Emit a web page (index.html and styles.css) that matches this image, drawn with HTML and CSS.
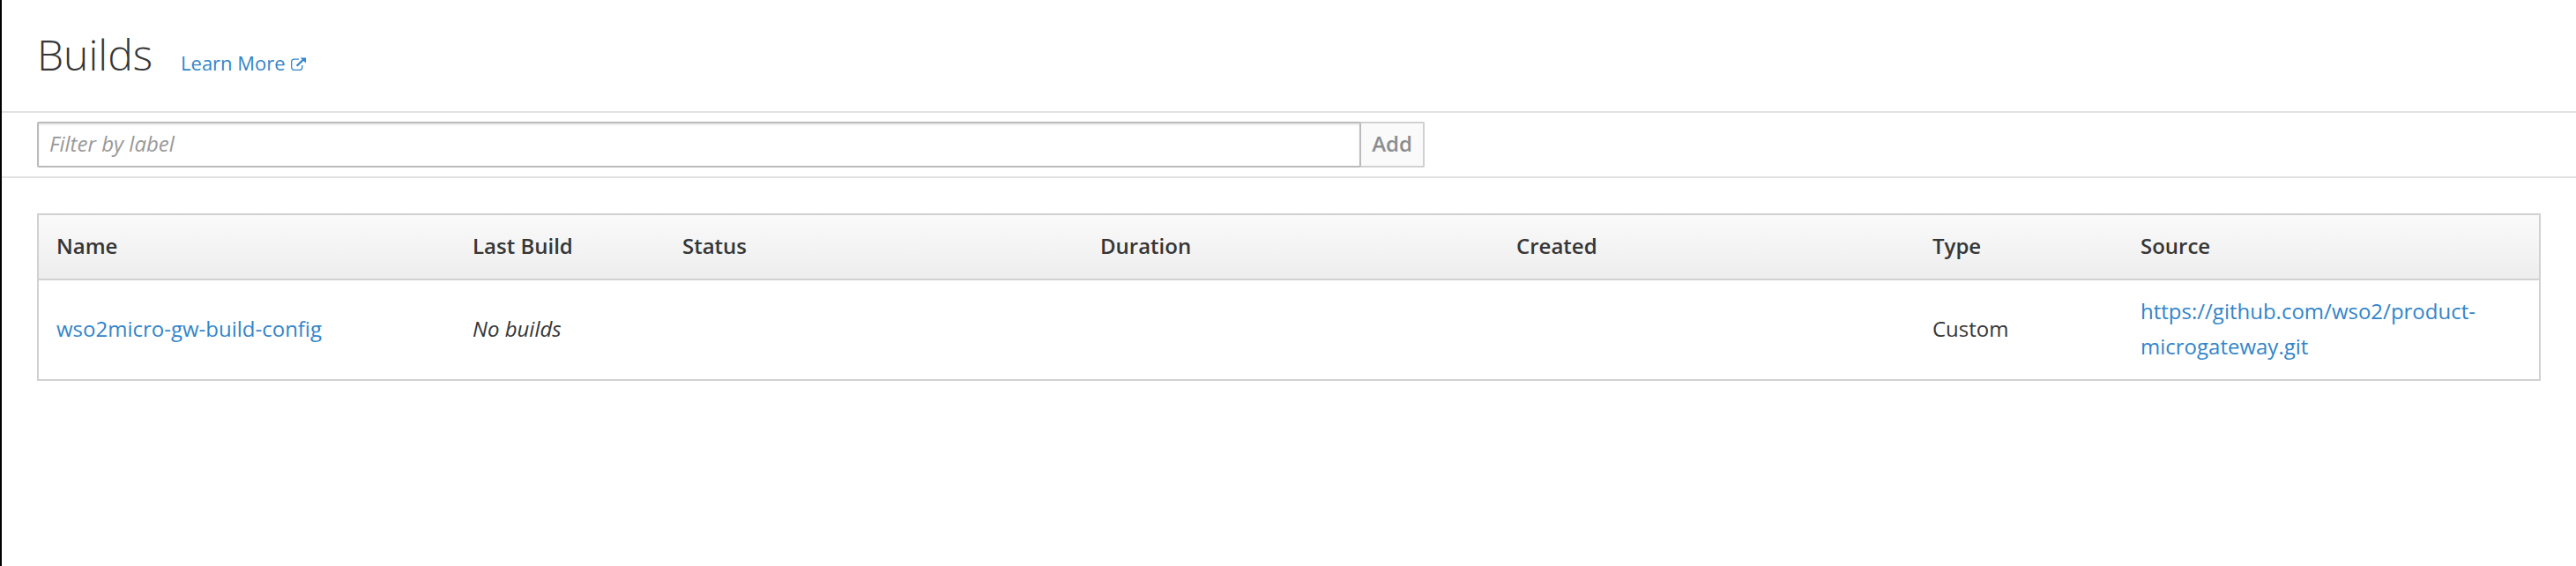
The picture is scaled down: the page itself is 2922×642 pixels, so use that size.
FILE: index.html
```
<!DOCTYPE html>
<html lang="en">
<head>
<meta charset="utf-8">
<title>Builds</title>
<link rel="stylesheet" href="styles.css">
</head>
<body>
<main class="page">
  <header class="page-header">
    <h1 class="page-title">Builds</h1>
    <a class="learn-more" href="#"><span class="learn-text">Learn More</span><svg class="external-icon" viewBox="0 0 17 15" fill="none" stroke="currentColor"><path d="M9 2.2H3.4A2.7 2.7 0 0 0 .7 4.9v6.7a2.7 2.7 0 0 0 2.7 2.7h6.7a2.7 2.7 0 0 0 2.7-2.7V9" stroke-width="1.3"/><path d="M6.6 9.8 14.2 2.6" stroke-width="2.2"/><path d="M10.6 .4H17v6.2z" fill="currentColor" stroke="none"/></svg></a>
  </header>
  <form class="filter-bar">
    <input class="filter-input" type="text" placeholder="Filter by label">
    <button class="filter-add" type="button" disabled>Add</button>
  </form>
  <table class="builds-table">
    <colgroup><col class="col-name"><col class="col-last"><col class="col-status"><col class="col-name"><col class="col-name"><col class="col-type"><col></colgroup>
    <thead>
      <tr><th>Name</th><th>Last Build</th><th>Status</th><th>Duration</th><th>Created</th><th>Type</th><th>Source</th></tr>
    </thead>
    <tbody>
      <tr><td><a href="#">wso2micro-gw-build-config</a></td><td><em>No builds</em></td><td></td><td></td><td></td><td>Custom</td><td><a href="#">https://github.com/wso2/product-<wbr>microgateway.git</a></td></tr>
    </tbody>
  </table>
</main>
</body>
</html>
```
FILE: styles.css
```
* { box-sizing: border-box; }
body {
  margin: 0;
  background: #fff;
  color: #363636;
  font: 24px/40px "Open Sans", "Noto Sans", sans-serif;
}
a { color: #3385c9; text-decoration: none; }
.page { min-height: 642px; border-left: 2px solid #000; }
.page-header {
  display: flex;
  align-items: baseline;
  height: 128px;
  padding: 35px 40px 0;
  border-bottom: 2px solid #e2e2e2;
}
.page-title { margin: 0 32px 0 0; font-size: 48px; font-weight: 300; line-height: 53px; }
.learn-more { display: flex; align-items: baseline; gap: 6px; font-size: 22px; line-height: 36px; }
.external-icon { width: 17px; height: 15px; }
.filter-bar {
  display: flex;
  height: 74px;
  padding: 10px 40px;
  border-bottom: 2px solid #e2e2e2;
}
.filter-input {
  width: 1502px;
  height: 52px;
  padding: 0 12px 4px;
  border: 2px solid #bbb;
  border-radius: 2px 0 0 2px;
  box-shadow: inset 0 2px 2px rgba(3, 3, 3, .075);
  background: #fff;
  font: 24px/40px "Open Sans", "Noto Sans", sans-serif;
}
.filter-input::placeholder { color: #999; opacity: 1; font-style: italic; }
.filter-add {
  width: 74px;
  height: 52px;
  margin-left: -2px;
  padding: 0 0 2px;
  border: 2px solid #d1d1d1;
  border-left-color: #bbb;
  border-radius: 0 2px 2px 0;
  background: #fafafa;
  color: #8b8d8f;
  font: 600 24px/40px "Open Sans", "Noto Sans", sans-serif;
}
.builds-table {
  width: 2840px;
  margin: 40px 0 0 40px;
  border: 2px solid #d1d1d1;
  border-spacing: 0;
  table-layout: fixed;
}
.col-name { width: 472px; }
.col-last { width: 238px; }
.col-status { width: 474px; }
.col-type { width: 236px; }
th, td { padding: 15px 20px 17px; text-align: left; vertical-align: middle; }
thead { background: linear-gradient(#fafafa, #ededed); }
th { height: 74px; border-bottom: 2px solid #d1d1d1; font-weight: 600; }
td { height: 112px; }
```
